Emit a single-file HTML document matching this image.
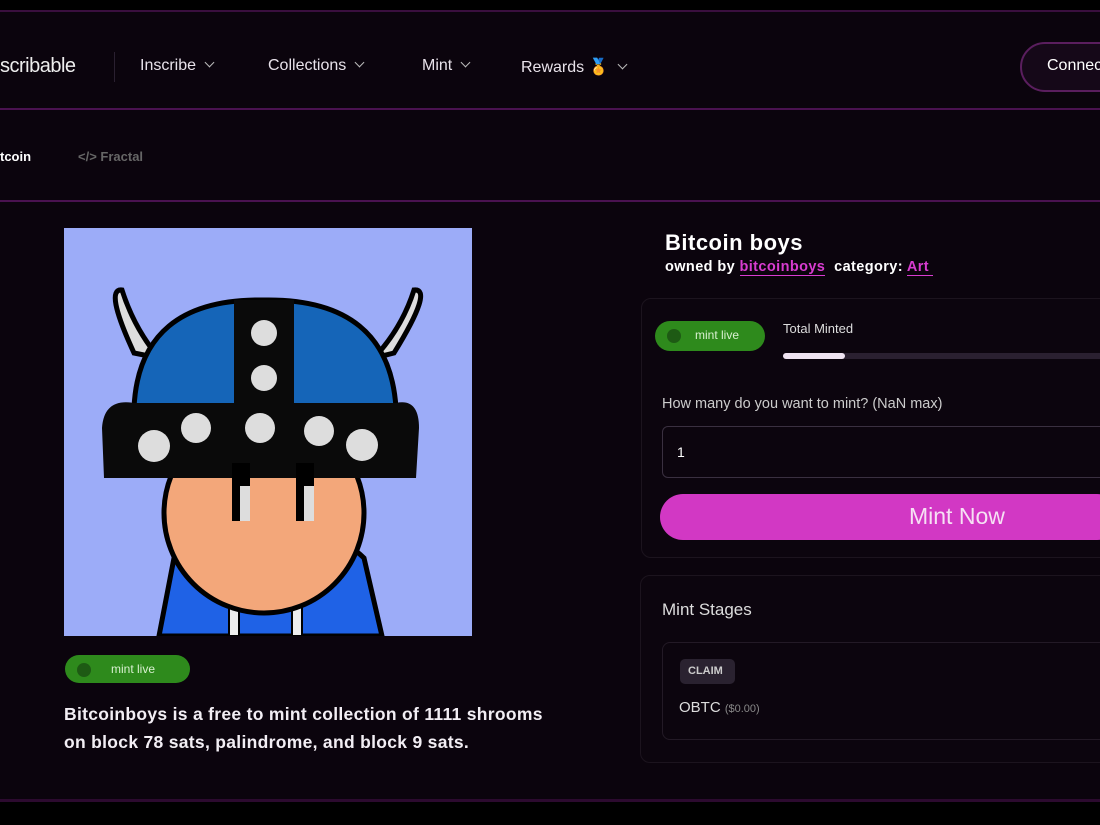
<!DOCTYPE html>
<html><head><meta charset="utf-8"><style>
*{margin:0;padding:0;box-sizing:border-box}
body{width:1100px;height:825px;background:#000;font-family:"Liberation Sans",sans-serif;color:#fff;position:relative;overflow:hidden}
.page{position:absolute;left:0;top:10px;width:1100px;height:792px;background:#0b040d;border-top:2px solid #3a0f3e;border-bottom:3px solid #2c0a2f}
.abs{position:absolute}
.hl{position:absolute;left:0;width:1100px;height:2px;background:#4a1250}
.nav{font-size:16px;color:#e8e2ea;top:57px}
.chev{display:inline-block;width:7px;height:7px;border-right:1.5px solid #bbb;border-bottom:1.5px solid #bbb;transform:rotate(45deg);margin-left:10px;position:relative;top:-4px}
.pill{position:absolute;background:#2e8a1c;border-radius:16px;color:#d8f0d0;font-size:12px}
.pill i{position:absolute;left:12px;top:8px;width:14px;height:14px;border-radius:50%;background:#1e5a14}
</style></head><body>
<div class="page"></div>
<div class="hl" style="top:108px"></div>
<div class="hl" style="top:200px"></div>
<div class="abs" style="left:0;top:55px;font-size:20px;letter-spacing:-0.5px;color:#eee">scribable</div>
<div class="abs" style="left:114px;top:52px;width:1px;height:30px;background:#2a2030"></div>
<div class="abs nav" style="left:140px">Inscribe<span class="chev"></span></div>
<div class="abs nav" style="left:268px">Collections<span class="chev"></span></div>
<div class="abs nav" style="left:422px">Mint<span class="chev"></span></div>
<div class="abs nav" style="left:521px">Rewards <span style="color:#e8a030">🏅</span><span class="chev"></span></div>
<div class="abs" style="left:1020px;top:42px;width:120px;height:50px;border:2px solid #5a1e5e;border-radius:25px;background:#150818;font-size:16px;padding:13px 0 0 25px">Connect</div>
<div class="abs" style="left:0;top:149px;font-size:13px;font-weight:bold">tcoin</div>
<div class="abs" style="left:78px;top:149px;font-size:13px;font-weight:bold;color:#666">&lt;/&gt; Fractal</div>

<svg class="abs" style="left:64px;top:228px" width="408" height="408" viewBox="0 0 408 408">
<rect width="408" height="408" fill="#9cacf8"/>
<path d="M95 408 L110 330 Q140 300 200 300 Q270 300 300 330 L318 408Z" fill="#1f62e6" stroke="#000" stroke-width="5"/>
<rect x="165" y="375" width="10" height="33" fill="#eee" stroke="#000" stroke-width="2"/>
<rect x="228" y="375" width="10" height="33" fill="#eee" stroke="#000" stroke-width="2"/>
<circle cx="200" cy="285" r="100" fill="#f3a77a" stroke="#000" stroke-width="5"/>
<path d="M70 125 Q40 60 58 62 Q70 100 95 130Z" fill="#ddd" stroke="#000" stroke-width="5"/>
<path d="M330 125 Q370 60 350 62 Q338 100 310 130Z" fill="#ddd" stroke="#000" stroke-width="5"/>
<path d="M70 180 Q75 70 200 72 Q325 70 332 180Z" fill="#1565b8" stroke="#000" stroke-width="5"/>
<rect x="170" y="72" width="60" height="110" fill="#0a0a0a"/>
<path d="M38 200 Q40 170 70 175 L332 175 Q355 170 355 200 L352 250 L40 250Z" fill="#0a0a0a"/>
<g fill="#ddd"><circle cx="200" cy="105" r="13"/><circle cx="200" cy="150" r="13"/><circle cx="90" cy="218" r="16"/><circle cx="132" cy="200" r="15"/><circle cx="196" cy="200" r="15"/><circle cx="255" cy="203" r="15"/><circle cx="298" cy="217" r="16"/></g>
<rect x="168" y="235" width="18" height="58" fill="#000"/><rect x="176" y="258" width="10" height="35" fill="#ddd"/>
<rect x="232" y="235" width="18" height="58" fill="#000"/><rect x="240" y="258" width="10" height="35" fill="#ddd"/>
</svg>
<div class="pill" style="left:65px;top:655px;width:125px;height:28px"><i></i><span style="position:absolute;left:46px;top:7px">mint live</span></div>
<div class="abs" style="left:64px;top:700px;font-size:17.5px;font-weight:bold;line-height:28px;color:#f2eef4;letter-spacing:0.3px;white-space:nowrap">Bitcoinboys is a free to mint collection of 1111 shrooms<br>on block 78 sats, palindrome, and block 9 sats.</div>

<div class="abs" style="left:665px;top:230px;font-size:22px;font-weight:bold;letter-spacing:0.5px">Bitcoin boys</div>
<div class="abs" style="left:665px;top:259px;font-size:14.5px;font-weight:bold;letter-spacing:0.4px">owned by <span style="color:#d83cd0;border-bottom:1px solid #d83cd0">bitcoinboys</span> &nbsp;category: <span style="color:#d83cd0;border-bottom:1px solid #d83cd0">Art&nbsp;</span></div>
<div class="abs" style="left:641px;top:298px;width:480px;height:260px;border:1px solid #1c141e;border-radius:10px;background:#0c050e"></div>
<div class="pill" style="left:655px;top:321px;width:110px;height:30px"><i></i><span style="position:absolute;left:40px;top:7px">mint live</span></div>
<div class="abs" style="left:783px;top:321px;font-size:13px;color:#ddd">Total Minted</div>
<div class="abs" style="left:783px;top:353px;width:330px;height:6px;background:#2a2030;border-radius:3px"></div>
<div class="abs" style="left:783px;top:353px;width:62px;height:6px;background:#f0e4f2;border-radius:3px"></div>
<div class="abs" style="left:662px;top:396px;font-size:14.5px;color:#ccc">How many do you want to mint? (NaN max)</div>
<div class="abs" style="left:662px;top:426px;width:460px;height:52px;border:1px solid #3a3040;border-radius:6px;font-size:14px;padding:17px 0 0 14px">1</div>
<div class="abs" style="left:660px;top:494px;width:460px;height:46px;background:#d238c4;border-radius:23px;font-size:23px;color:#f6e0f4;padding:9px 0 0 249px">Mint Now</div>

<div class="abs" style="left:640px;top:575px;width:480px;height:188px;border:1px solid #1c141e;border-radius:10px;background:#0c050e"></div>
<div class="abs" style="left:662px;top:600px;font-size:17px;color:#ddd">Mint Stages</div>
<div class="abs" style="left:662px;top:642px;width:450px;height:98px;border:1px solid #231a26;border-radius:8px"></div>
<div class="abs" style="left:680px;top:659px;width:55px;height:25px;background:#2a2230;border-radius:5px;font-size:11px;font-weight:bold;color:#ccc;padding:6px 0 0 8px">CLAIM</div>
<div class="abs" style="left:679px;top:699px;font-size:15px;color:#ddd">OBTC <span style="font-size:11px;color:#888">($0.00)</span></div>
</body></html>
